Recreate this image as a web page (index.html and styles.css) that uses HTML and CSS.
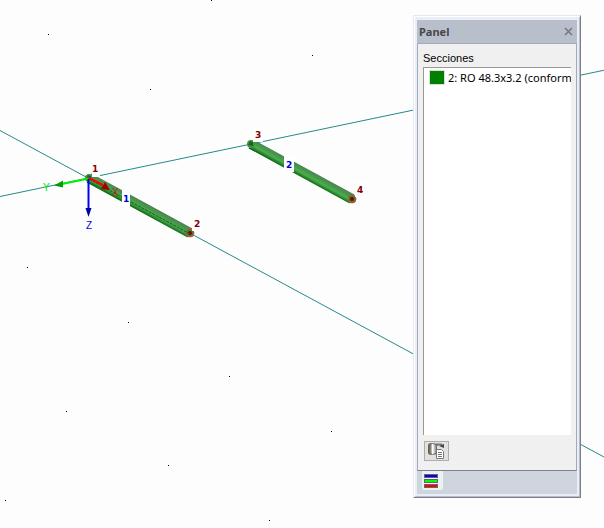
FILE: index.html
```html
<!DOCTYPE html>
<html lang="es">
<head>
    <meta charset="UTF-8">
    <meta name="viewport" content="width=device-width, initial-scale=1.0">
    <title>Panel</title>
    <link rel="stylesheet" href="styles.css">
</head>
<body>
    <main class="workspace">
        <svg class="scene" aria-label="Modelo">
            <defs>
                <linearGradient id="tube" gradientUnits="userSpaceOnUse" x1="53" y1="23" x2="48" y2="32">
                    <stop offset="0" stop-color="#4b8350"/>
                    <stop offset="0.35" stop-color="#489a4b"/>
                    <stop offset="0.6" stop-color="#4bae4e"/>
                    <stop offset="0.78" stop-color="#2f8c32"/>
                    <stop offset="1" stop-color="#0b6410"/>
                </linearGradient>
                <g id="member">
                    <path d="M0 0L101 55" stroke="url(#tube)" stroke-width="10"/>
                    <circle cx="0" cy="0" r="4" fill="#43924a"/>
                    <path d="M-3 1l2-4 3 1v4z" fill="#1d6322"/>
                    <circle cx="101" cy="55" r="4" fill="#39843a" stroke="#c0562c"/>
                    <circle cx="101" cy="55" r="2" fill="#8b0000"/>
                </g>
            </defs>

            <!-- Grid points -->
            <g fill="#000" shape-rendering="crispEdges">
                <rect x="211" y="0" width="1" height="1"/>
                <rect x="48" y="34" width="1" height="1"/>
                <rect x="312" y="55" width="1" height="1"/>
                <rect x="150" y="89" width="1" height="1"/>
                <rect x="27" y="267" width="1" height="1"/>
                <rect x="128" y="322" width="1" height="1"/>
                <rect x="229" y="376" width="1" height="1"/>
                <rect x="66" y="411" width="1" height="1"/>
                <rect x="331" y="431" width="1" height="1"/>
                <rect x="168" y="465" width="1" height="1"/>
                <rect x="5" y="500" width="1" height="1"/>
                <rect x="269" y="520" width="1" height="1"/>
            </g>

            <!-- Work plane axes -->
            <g class="guide">
                <path d="M0 130.500L1208 783.500"/>
                <path d="M0 196.500L1208 -56"/>
            </g>

            <!-- Members -->
            <use href="#member" x="89" y="178"/>
            <use href="#member" x="251" y="144"/>
            <path class="member-axis" d="M89 179L190 234"/>

            <!-- Coordinate system -->
            <path d="M88.500 178.500L62 184" stroke="#00f000" stroke-width="2"/>
            <path d="M54 185.500l9-5v7z" fill="#00a000"/>
            <path d="M89 178L103 185" stroke="#f00" stroke-width="2"/>
            <path d="M110 190l-9-1 4-7z" fill="#a00000"/>
            <path d="M88.500 179V208" stroke="#0000f0" stroke-width="2"/>
            <path d="M88.500 217l-3-9h6z" fill="#0000a0"/>
            <g class="axis-name">
                <text x="43" y="191" fill="#00e000">Y</text>
                <text x="112" y="196" fill="#c02020">X</text>
                <text x="86" y="229" fill="#0000e0">Z</text>
            </g>

            <!-- Node and member numbers -->
            <g fill="#fff">
                <rect x="92" y="161" width="8" height="16"/>
                <rect x="192" y="216" width="10" height="15"/>
                <rect x="253" y="127" width="10" height="15"/>
                <rect x="355" y="182" width="10" height="15"/>
                <rect x="122" y="190" width="8" height="16"/>
                <rect x="284" y="156" width="10" height="16"/>
            </g>
            <g class="number node">
                <text x="92" y="172">1</text>
                <text x="194" y="227">2</text>
                <text x="255" y="138">3</text>
                <text x="357" y="193">4</text>
            </g>
            <g class="number bar">
                <text x="123" y="202">1</text>
                <text x="286" y="168">2</text>
            </g>
        </svg>

        <aside class="panel">
            <header class="panel-header">
                <h1>Panel</h1>
                <button class="close" aria-label="Cerrar">
                    <svg width="9" height="9"><path d="M1 1l7 7M8 1l-7 7" stroke="#737780" stroke-width="1.500"/></svg>
                </button>
            </header>
            <section class="panel-body">
                <h2 id="sections-label">Secciones</h2>
                <ul class="sections" aria-labelledby="sections-label">
                    <li><span class="swatch"></span>2: RO 48.3x3.2 (conform</li>
                </ul>
                <button class="tool" aria-label="Opciones">
                    <svg width="17" height="16" viewBox="0 0 17 16">
                        <defs>
                            <linearGradient id="metal">
                                <stop offset="0" stop-color="#5a534d"/>
                                <stop offset="0.3" stop-color="#8d8278"/>
                                <stop offset="0.5" stop-color="#fffdfa"/>
                                <stop offset="0.65" stop-color="#e6dfd8"/>
                                <stop offset="1" stop-color="#5f5852"/>
                            </linearGradient>
                        </defs>
                        <rect x="0" y="0" width="9" height="12" rx="3" fill="url(#metal)"/>
                        <path d="M1 1.500Q4.500 -0.500 8 1.500M1 10.500Q4.500 12.500 8 10.500" fill="none" stroke="#6d655e"/>
                        <path d="M9 3V1.500H14" fill="none" stroke="#777" stroke-width="2"/>
                        <path d="M11 3l5-2v4z" fill="#444"/>
                        <path d="M8.500 6.500h5l2 2v7h-7z" fill="#fff" stroke="#777"/>
                        <path d="M10 9.500h4M10 11.500h4M10 13.500h4" stroke="#777"/>
                    </svg>
                </button>
            </section>
            <nav class="tabs">
                <button class="tab" aria-label="Colores">
                    <svg width="14" height="14" shape-rendering="crispEdges">
                        <g stroke="#666">
                            <rect x="0.500" y="0.500" width="13" height="3" fill="#00f"/>
                            <rect x="0.500" y="5.500" width="13" height="3" fill="#0f0"/>
                            <rect x="0.500" y="10.500" width="13" height="3" fill="#f00"/>
                        </g>
                    </svg>
                </button>
            </nav>
        </aside>
    </main>
</body>
</html>
```
FILE: styles.css
```css
* {
    box-sizing: border-box;
}
body {
    margin: 0;
    background-color: #fdfdfd;
    font-family: "Noto Sans", "Open Sans", sans-serif;
    font-size: 11px;
}
button {
    display: flex;
    padding: 0;
    border: none;
    background: none;
    cursor: pointer;
}
.workspace {
    position: relative;
    height: 100vh;
    overflow: hidden;
}
.scene {
    display: block;
    width: 100%;
    height: 100%;
}
.guide {
    stroke: #258a8a;
    stroke-width: 1;
}
.member-axis {
    stroke: #0f5c2c;
    stroke-dasharray: 3 1;
}
.axis-name {
    font: 10px "Liberation Sans", Arial, sans-serif;
}
.number {
    font: bold 9px "DejaVu Sans", Verdana, sans-serif;
}
.node {
    fill: #800000;
}
.bar {
    fill: #0000d8;
}

/* Floating panel over the model */
.panel {
    position: absolute;
    top: 15px;
    right: 23px;
    bottom: 30px;
    width: 168px;
    display: flex;
    flex-direction: column;
    padding: 4px 3px 3px;
    background-color: #e9edf7;
    border: 1px solid #e3e8f3;
    border-right-color: #7c7f87;
    border-bottom-color: #7c7f87;
    box-shadow: inset 1px 1px #fff, inset -1px -1px #b9bdc7;
}
.panel-header {
    display: flex;
    align-items: center;
    justify-content: space-between;
    height: 23px;
    padding: 0 4px 0 2px;
    background-color: #b9bfca;
}
.panel-header h1 {
    margin: 0;
    font-size: 11px;
    color: #44474d;
}
.panel-body {
    flex: 1;
    min-height: 0;
    display: flex;
    flex-direction: column;
    padding: 6px 5px 9px;
    background-color: #f0f0f0;
    border: 1px solid #a3aaba;
    border-bottom-color: #7b8089;
}
.panel-body h2 {
    margin: 0;
    font: 11px/17px "Liberation Sans", Arial, sans-serif;
    color: #000;
}
.sections {
    flex: 1;
    margin: 0 0 6px;
    padding: 1px 0 0 5px;
    overflow: hidden;
    list-style: none;
    background-color: #fff;
    border-top: 1px solid #999;
    border-left: 1px solid #999;
}
.sections li {
    display: flex;
    align-items: center;
    gap: 3px;
    height: 16px;
    white-space: nowrap;
    color: #000;
}
.swatch {
    flex: none;
    width: 16px;
    height: 15px;
    background-color: #008000;
    border: 1px solid #dcdcdc;
}
.tool {
    align-self: flex-start;
    align-items: center;
    justify-content: center;
    width: 25px;
    height: 20px;
    margin-left: 1px;
    background-color: #e1e1e1;
    border: 1px solid #adadad;
}
.tabs {
    height: 23px;
    padding-left: 4px;
    background-color: #d0d4dd;
}
.tab {
    width: 23px;
    height: 20px;
    padding: 3px 2px;
    background-color: #f0f0f0;
    border: 1px solid #b9dfe4;
    border-top: none;
    border-radius: 0 0 4px 4px;
}
```
